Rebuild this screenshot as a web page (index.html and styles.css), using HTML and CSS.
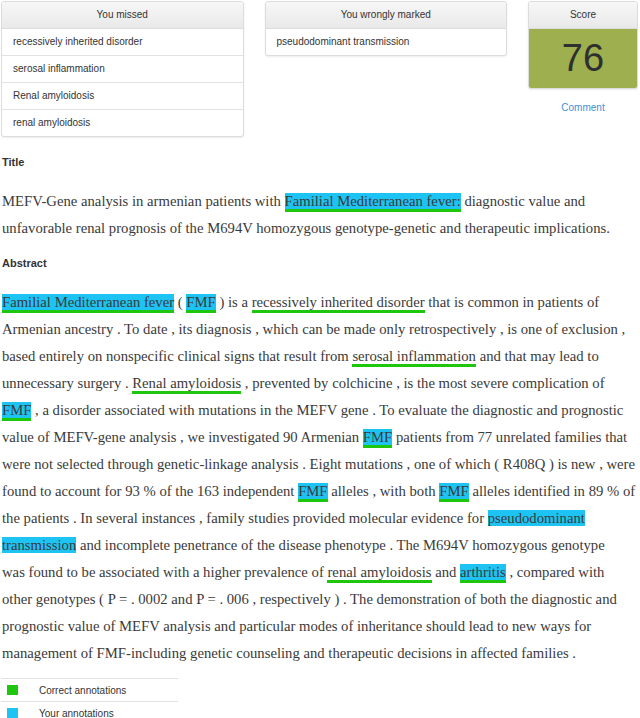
FILE: index.html
```html
<html lang="en">
  <head>
    <meta charset="UTF-8" />
    <meta name="viewport" content="width=device-width, initial-scale=1.0" />
    <title>Annotation result</title>
    <link rel="stylesheet" href="styles.css">
  </head>
  <body>
    <div class="summary">
      <div class="panel panel-wide">
        <div class="panel-head">You missed</div>
        <div class="panel-row">recessively inherited disorder</div>
        <div class="panel-row">serosal inflammation</div>
        <div class="panel-row">Renal amyloidosis</div>
        <div class="panel-row">renal amyloidosis</div>
      </div>
      <div class="panel panel-wide">
        <div class="panel-head">You wrongly marked</div>
        <div class="panel-row">pseudodominant transmission</div>
      </div>
      <div class="score-col">
        <div class="panel">
          <div class="panel-head">Score</div>
          <div class="score">76</div>
        </div>
        <a class="comment" href="#">Comment</a>
      </div>
    </div>

    <h4 class="section">Title</h4>
    <p class="doc">
      MEFV-Gene analysis in armenian patients with <span class="mine correct">Familial Mediterranean fever:</span> diagnostic value and<br>
      unfavorable renal prognosis of the M694V homozygous genotype-genetic and therapeutic implications.
    </p>

    <h4 class="section section-next">Abstract</h4>
    <p class="doc">
      <span class="mine correct">Familial Mediterranean fever</span> ( <span class="mine correct">FMF</span> ) is a <span class="correct">recessively inherited disorder</span> that is common in patients of<br>
      Armenian ancestry . To date , its diagnosis , which can be made only retrospectively , is one of exclusion ,<br>
      based entirely on nonspecific clinical signs that result from <span class="correct">serosal inflammation</span> and that may lead to<br>
      unnecessary surgery . <span class="correct">Renal amyloidosis</span> , prevented by colchicine , is the most severe complication of<br>
      <span class="mine correct">FMF</span> , a disorder associated with mutations in the MEFV gene . To evaluate the diagnostic and prognostic<br>
      value of MEFV-gene analysis , we investigated 90 Armenian <span class="mine correct">FMF</span> patients from 77 unrelated families that<br>
      were not selected through genetic-linkage analysis . Eight mutations , one of which ( R408Q ) is new , were<br>
      found to account for 93 % of the 163 independent <span class="mine correct">FMF</span> alleles , with both <span class="mine correct">FMF</span> alleles identified in 89 % of<br>
      the patients . In several instances , family studies provided molecular evidence for <span class="mine">pseudodominant<br>
      transmission</span> and incomplete penetrance of the disease phenotype . The M694V homozygous genotype<br>
      was found to be associated with a higher prevalence of <span class="correct">renal amyloidosis</span> and <span class="mine correct">arthritis</span> , compared with<br>
      other genotypes ( P = . 0002 and P = . 006 , respectively ) . The demonstration of both the diagnostic and<br>
      prognostic value of MEFV analysis and particular modes of inheritance should lead to new ways for<br>
      management of FMF-including genetic counseling and therapeutic decisions in affected families .
    </p>

    <ul class="legend">
      <li><span class="swatch swatch-correct"></span>Correct annotations</li>
      <li><span class="swatch swatch-mine"></span>Your annotations</li>
    </ul>
  </body>
</html>
```

FILE: styles.css
```css
body {
  margin: 1px 2px 0 1px;
  font-family: "Liberation Sans", Arial, sans-serif;
  color: #333;
  background: #fff;
}

.summary {
  display: flex;
  align-items: flex-start;
  gap: 21px;
}

.panel {
  border: 1px solid #dcdcdc;
  border-radius: 3px;
  box-shadow: 0 1px 2px rgba(0, 0, 0, 0.08);
  overflow: hidden;
  background: #fff;
}

.panel-wide {
  width: 241px;
}

.panel-head {
  height: 26px;
  line-height: 26px;
  text-align: center;
  font-size: 10px;
  background: linear-gradient(#f7f7f7, #e9e9e9);
  border-bottom: 1px solid #dcdcdc;
}

.panel-row {
  height: 26px;
  line-height: 26px;
  padding-left: 11px;
  font-size: 10px;
  border-top: 1px solid #e2e2e2;
}

.panel-head + .panel-row {
  border-top: none;
}

.score-col {
  width: 110px;
  display: flex;
  flex-direction: column;
  align-items: center;
}

.score-col .panel {
  width: 108px;
}

.score {
  height: 59px;
  line-height: 59px;
  text-align: center;
  background: #9daf4f;
  color: #2f2f2f;
  font-size: 38px;
}

.comment {
  margin-top: 13px;
  font-size: 10px;
  color: #3f8fd5;
  text-decoration: none;
}

.section {
  margin: 17px 0 0 1px;
  font-size: 11px;
  line-height: 16px;
  font-weight: bold;
  color: #333;
}

.section-next {
  margin-top: 13px;
}

.doc {
  margin: 18px 0 0 1px;
  font-family: "Liberation Serif", "Times New Roman", serif;
  font-size: 14.7px;
  line-height: 27px;
  color: #3a3a3a;
  white-space: nowrap;
}

.mine {
  background: #1dc4f3;
}

.correct {
  border-bottom: 3px solid #1fc60e;
}

.legend {
  list-style: none;
  margin: 11px 0 0 0;
  padding: 0;
  width: 177px;
  font-size: 10px;
  color: #333;
}

.legend li {
  display: flex;
  align-items: center;
  height: 22px;
  border-top: 1px solid #e2e2e2;
}

.swatch {
  width: 11px;
  height: 10px;
  margin: 0 21px 0 6px;
}

.swatch-correct {
  background: #1fc60e;
}

.swatch-mine {
  background: #1dc4f3;
}
```
